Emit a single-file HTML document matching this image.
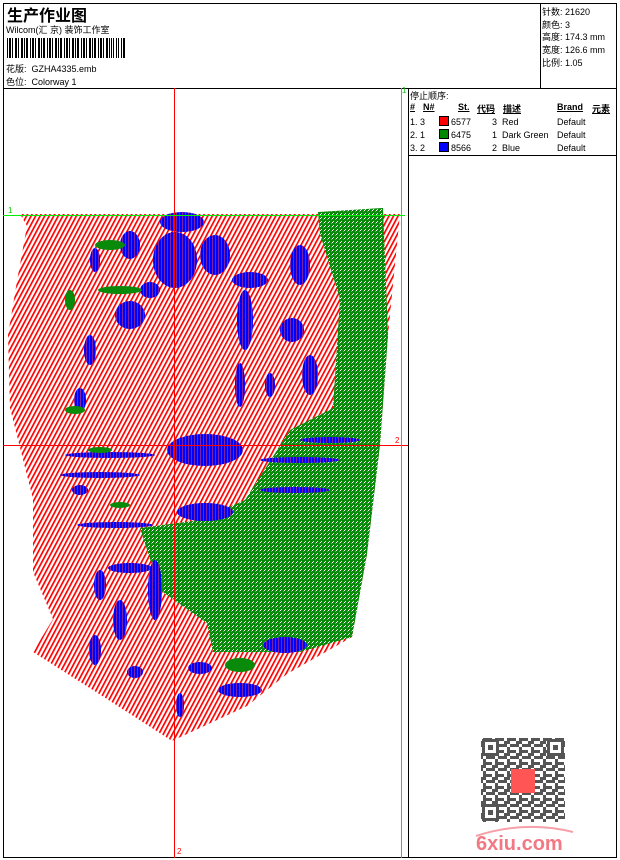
<!DOCTYPE html>
<html><head><meta charset="utf-8"><style>
*{margin:0;padding:0}
body{width:620px;height:860px;background:#fff;position:relative;overflow:hidden;font-family:"Liberation Sans","Noto Sans CJK SC",sans-serif;font-size:9px;color:#000}
.a{position:absolute;white-space:nowrap}
.b{font-weight:bold;text-decoration:underline}
</style></head><body>
<svg class="a" style="left:0;top:0" width="620" height="860">
<defs>
<pattern id="rh" width="4" height="4" patternUnits="userSpaceOnUse" patternTransform="rotate(28)">
<rect width="4" height="4" fill="#fff"/><rect width="1.7" height="4" fill="#f00"/></pattern>
<pattern id="gh" width="4" height="4" patternUnits="userSpaceOnUse">
<rect width="4" height="4" fill="#0a8a0a"/><rect x="1" y="1" width="1" height="1" fill="#fff"/><rect x="3" y="3" width="1" height="1" fill="#f66"/><rect x="0" y="2" width="1" height="1" fill="#fff"/></pattern>
<pattern id="bh" width="3" height="3" patternUnits="userSpaceOnUse">
<rect width="3" height="3" fill="#00f"/><rect x="2" width="1" height="3" fill="#f44" opacity=".5"/></pattern>
<pattern id="qr" width="12" height="12" patternUnits="userSpaceOnUse">
<rect width="12" height="12" fill="#fff"/><rect x="0" y="0" width="3" height="3" fill="#555"/><rect x="6" y="0" width="6" height="3" fill="#555"/><rect x="3" y="3" width="3" height="6" fill="#555"/><rect x="9" y="6" width="3" height="3" fill="#555"/><rect x="0" y="9" width="6" height="3" fill="#555"/><rect x="6" y="6" width="3" height="3" fill="#555"/></pattern>
</defs>
<rect x="3.5" y="3.5" width="613" height="854" fill="none" stroke="#000"/>
<line x1="3" y1="88.5" x2="617" y2="88.5" stroke="#000"/>
<line x1="540.5" y1="3" x2="540.5" y2="88" stroke="#000"/>
<line x1="408.5" y1="88" x2="408.5" y2="858" stroke="#000"/>
<line x1="408" y1="155.5" x2="617" y2="155.5" stroke="#000"/>
<g fill="#000">
<rect x="7" y="38" width="1" height="20"/><rect x="9" y="38" width="2" height="20"/><rect x="12" y="38" width="1" height="20"/><rect x="15" y="38" width="2" height="20"/><rect x="18" y="38" width="1" height="20"/><rect x="21" y="38" width="2" height="20"/><rect x="24" y="38" width="1" height="20"/><rect x="26" y="38" width="2" height="20"/><rect x="30" y="38" width="1" height="20"/><rect x="32" y="38" width="2" height="20"/><rect x="35" y="38" width="1" height="20"/><rect x="38" y="38" width="2" height="20"/><rect x="41" y="38" width="1" height="20"/><rect x="43" y="38" width="2" height="20"/><rect x="47" y="38" width="1" height="20"/><rect x="49" y="38" width="2" height="20"/><rect x="52" y="38" width="1" height="20"/><rect x="55" y="38" width="2" height="20"/><rect x="58" y="38" width="1" height="20"/><rect x="60" y="38" width="2" height="20"/><rect x="64" y="38" width="1" height="20"/><rect x="66" y="38" width="2" height="20"/><rect x="69" y="38" width="1" height="20"/><rect x="72" y="38" width="2" height="20"/><rect x="75" y="38" width="1" height="20"/><rect x="77" y="38" width="2" height="20"/><rect x="81" y="38" width="1" height="20"/><rect x="83" y="38" width="2" height="20"/><rect x="86" y="38" width="1" height="20"/><rect x="89" y="38" width="2" height="20"/><rect x="92" y="38" width="1" height="20"/><rect x="94" y="38" width="2" height="20"/><rect x="98" y="38" width="1" height="20"/><rect x="100" y="38" width="2" height="20"/><rect x="103" y="38" width="1" height="20"/><rect x="106" y="38" width="2" height="20"/><rect x="109" y="38" width="1" height="20"/><rect x="111" y="38" width="1" height="20"/><rect x="113" y="38" width="1" height="20"/><rect x="116" y="38" width="1" height="20"/><rect x="118" y="38" width="1" height="20"/><rect x="121" y="38" width="1" height="20"/><rect x="123" y="38" width="2" height="20"/>
</g>
<polygon fill="url(#rh)" points="20,214 400,214 388,335 380,445 367,554 352,637 287,674 247,706 172,741 107,699 33,652 53,619 33,572 33,499 10,408 8,335 17,281 27,226"/>
<polygon fill="url(#gh)" points="318,212 383,208 388,335 380,445 367,554 352,637 300,652 213,652 207,623 160,590 140,528 200,520 245,500 290,430 333,408 340,299 320,234"/>
<g fill="url(#bh)">
<ellipse cx="182" cy="222" rx="22" ry="10"/><ellipse cx="175" cy="260" rx="22" ry="28"/><ellipse cx="215" cy="255" rx="15" ry="20"/><ellipse cx="130" cy="315" rx="15" ry="14"/><ellipse cx="250" cy="280" rx="18" ry="8"/><ellipse cx="245" cy="320" rx="8" ry="30"/><ellipse cx="292" cy="330" rx="12" ry="12"/><ellipse cx="300" cy="265" rx="10" ry="20"/><ellipse cx="310" cy="375" rx="8" ry="20"/><ellipse cx="240" cy="385" rx="5" ry="22"/><ellipse cx="270" cy="385" rx="5" ry="12"/><ellipse cx="130" cy="245" rx="10" ry="14"/><ellipse cx="95" cy="260" rx="5" ry="12"/><ellipse cx="150" cy="290" rx="10" ry="8"/>
<ellipse cx="205" cy="450" rx="38" ry="16"/><ellipse cx="205" cy="512" rx="28" ry="9"/><ellipse cx="110" cy="455" rx="45" ry="3"/><ellipse cx="100" cy="475" rx="40" ry="3"/><ellipse cx="300" cy="460" rx="40" ry="3"/><ellipse cx="295" cy="490" rx="35" ry="3"/><ellipse cx="285" cy="645" rx="22" ry="8"/><ellipse cx="240" cy="690" rx="22" ry="7"/><ellipse cx="155" cy="590" rx="7" ry="30"/><ellipse cx="120" cy="620" rx="7" ry="20"/><ellipse cx="95" cy="650" rx="6" ry="15"/><ellipse cx="130" cy="568" rx="22" ry="5"/><ellipse cx="80" cy="400" rx="6" ry="12"/><ellipse cx="90" cy="350" rx="6" ry="15"/><ellipse cx="115" cy="525" rx="38" ry="3"/><ellipse cx="135" cy="672" rx="8" ry="6"/><ellipse cx="200" cy="668" rx="12" ry="6"/><ellipse cx="180" cy="705" rx="4" ry="12"/><ellipse cx="100" cy="585" rx="6" ry="15"/><ellipse cx="80" cy="490" rx="8" ry="5"/><ellipse cx="330" cy="440" rx="30" ry="3"/></g>
<g fill="#0a8a0a"><ellipse cx="110" cy="245" rx="15" ry="5"/><ellipse cx="120" cy="290" rx="22" ry="4"/><ellipse cx="70" cy="300" rx="5" ry="10"/><ellipse cx="75" cy="410" rx="10" ry="4"/><ellipse cx="100" cy="450" rx="12" ry="3"/><ellipse cx="120" cy="505" rx="10" ry="3"/><ellipse cx="240" cy="665" rx="15" ry="7"/></g>
<line x1="174.5" y1="88" x2="174.5" y2="858" stroke="#f00"/>
<line x1="3" y1="445.5" x2="408" y2="445.5" stroke="#f00"/>
<line x1="401.5" y1="88" x2="401.5" y2="858" stroke="#0e0"/>
<line x1="3" y1="215.5" x2="405" y2="215.5" stroke="#0e0"/>
<rect x="439.5" y="116.5" width="9" height="9" fill="#f00" stroke="#000"/>
<rect x="439.5" y="129.5" width="9" height="9" fill="#080" stroke="#000"/>
<rect x="439.5" y="142.5" width="9" height="9" fill="#00f" stroke="#000"/>
<rect x="481" y="738" width="84" height="84" fill="url(#qr)"/>
<g fill="#fff" stroke="#555" stroke-width="3"><rect x="483.5" y="740.5" width="14" height="14"/><rect x="548.5" y="740.5" width="14" height="14"/><rect x="483.5" y="805.5" width="14" height="14"/></g>
<g fill="#555"><rect x="488" y="745" width="5" height="5"/><rect x="553" y="745" width="5" height="5"/><rect x="488" y="810" width="5" height="5"/></g>
<rect x="511" y="769" width="24" height="24" fill="#f55"/>
<path d="M476 836 Q525 820 573 832" stroke="#f6a0a8" stroke-width="2" fill="none"/>
<text x="476" y="850" font-family="Liberation Sans" font-weight="bold" font-size="20" fill="#f27883">6xiu.com</text>
</svg>
<div class="a" style="left:7px;top:2px;font-size:16px;font-weight:bold">生产作业图</div>
<div class="a" style="left:6px;top:23px">Wilcom(汇 京) 装饰工作室</div>
<div class="a" style="left:6px;top:62px">花版:&nbsp; GZHA4335.emb</div>
<div class="a" style="left:6px;top:75px">色位:&nbsp; Colorway 1</div>
<div class="a" style="left:542px;top:6px;line-height:12.7px">针数: 21620<br>颜色: 3<br>高度: 174.3 mm<br>宽度: 126.6 mm<br>比例: 1.05</div>
<div class="a" style="left:410px;top:89px">停止顺序:</div>
<div class="a" style="left:402px;top:86px;color:#0c0;font-size:8px">1</div>
<div class="a" style="left:8px;top:206px;color:#0c0;font-size:8px">1</div>
<div class="a" style="left:395px;top:436px;color:#f00;font-size:8px">2</div>
<div class="a" style="left:177px;top:847px;color:#f00;font-size:8px">2</div>
<div class="a b" style="left:410px;top:102px">#</div>
<div class="a b" style="left:423px;top:102px">N#</div>
<div class="a b" style="left:458px;top:102px">St.</div>
<div class="a b" style="left:477px;top:102px">代码</div>
<div class="a b" style="left:503px;top:102px">描述</div>
<div class="a b" style="left:557px;top:102px">Brand</div>
<div class="a b" style="left:592px;top:102px">元素</div>
<div class="a" style="left:410px;top:116px;line-height:13px">1. 3<br>2. 1<br>3. 2</div>
<div class="a" style="left:451px;top:116px;line-height:13px">6577<br>6475<br>8566</div>
<div class="a" style="left:492px;top:116px;line-height:13px">3&nbsp; Red<br>1&nbsp; Dark Green<br>2&nbsp; Blue</div>
<div class="a" style="left:557px;top:116px;line-height:13px">Default<br>Default<br>Default</div>
</body></html>
